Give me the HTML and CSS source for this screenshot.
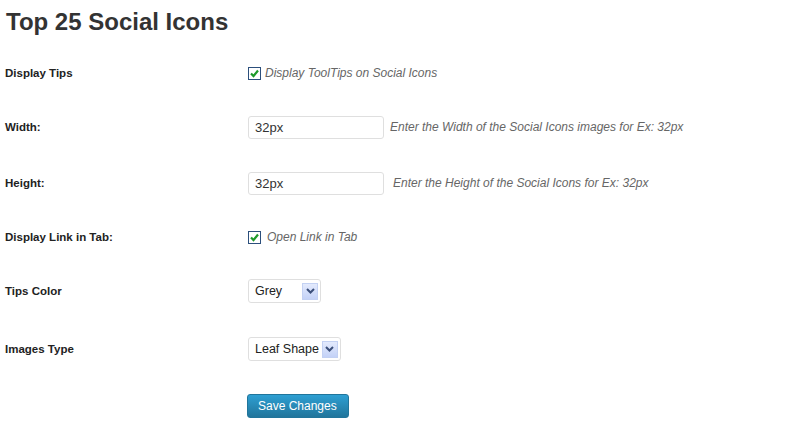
FILE: index.html
```html
<!DOCTYPE html>
<html>
<head>
<meta charset="utf-8">
<link rel="stylesheet" href="styles.css">
</head>
<body>
<div class="wrap">
  <h2 class="title">Top 25 Social Icons</h2>
  <div class="form">
    <div class="row r1">
      <div class="label">Display Tips</div>
      <div class="field">
        <span class="check"><svg width="11" height="11" viewBox="0 0 11 11"><path d="M2 5.5 L4.5 8 L9 2.5" fill="none" stroke="#1e9a2a" stroke-width="2.2"/></svg></span>
        <span class="desc">Display ToolTips on Social Icons</span>
      </div>
    </div>
    <div class="row r2">
      <div class="label">Width:</div>
      <div class="field">
        <span class="input">32px</span>
        <span class="desc d-width">Enter the Width of the Social Icons images for Ex: 32px</span>
      </div>
    </div>
    <div class="row r3">
      <div class="label">Height:</div>
      <div class="field">
        <span class="input">32px</span>
        <span class="desc d-height">Enter the Height of the Social Icons for Ex: 32px</span>
      </div>
    </div>
    <div class="row r4">
      <div class="label">Display Link in Tab:</div>
      <div class="field">
        <span class="check"><svg width="11" height="11" viewBox="0 0 11 11"><path d="M2 5.5 L4.5 8 L9 2.5" fill="none" stroke="#1e9a2a" stroke-width="2.2"/></svg></span>
        <span class="desc d-tab">Open Link in Tab</span>
      </div>
    </div>
    <div class="row r5">
      <div class="label">Tips Color</div>
      <div class="field">
        <span class="select sel-grey"><span class="sel-text">Grey</span><span class="arrow"><svg width="9" height="6" viewBox="0 0 9 6"><path d="M1 1 L4.5 4.5 L8 1" fill="none" stroke="#3b4f7a" stroke-width="2"/></svg></span></span>
      </div>
    </div>
    <div class="row r6">
      <div class="label">Images Type</div>
      <div class="field">
        <span class="select"><span class="sel-text">Leaf Shape</span><span class="arrow"><svg width="9" height="6" viewBox="0 0 9 6"><path d="M1 1 L4.5 4.5 L8 1" fill="none" stroke="#3b4f7a" stroke-width="2"/></svg></span></span>
      </div>
    </div>
    <div class="row r7">
      <div class="label"></div>
      <div class="field">
        <span class="button">Save Changes</span>
      </div>
    </div>
  </div>
</div>
</body>
</html>
```
FILE: styles.css
```css
html, body {
  margin: 0;
  padding: 0;
  background: #fff;
}
body {
  font-family: "Liberation Sans", Arial, sans-serif;
  color: #333;
}
.wrap {
  padding: 0 0 0 5px;
}
.title {
  margin: 0;
  padding: 8px 0 0 1px;
  height: 46px;
  box-sizing: border-box;
  font-size: 24px;
  font-weight: bold;
  color: #333;
  line-height: 28px;
}
.form {
  display: flex;
  flex-direction: column;
}
.row {
  display: flex;
  align-items: center;
}
.r1 { height: 54px; }
.r2 { height: 54px; }
.r3 { height: 58px; }
.r4 { height: 50px; }
.r5 { height: 58px; }
.r6 { height: 58px; }
.r7 { height: 56px; }
.label {
  width: 243px;
  flex: none;
  font-size: 11.5px;
  font-weight: bold;
  color: #222;
}
.field {
  display: flex;
  align-items: center;
}
.check {
  width: 11px;
  height: 11px;
  border: 1px solid #2c4f7c;
  background: #fff;
  display: flex;
  align-items: center;
  justify-content: center;
  margin-right: 4px;
}
.desc {
  font-size: 12px;
  font-style: italic;
  color: #666;
}
.d-width { margin-left: 6px; }
.d-height { margin-left: 9px; }
.d-tab { margin-left: 2px; }
.input {
  border: 1px solid #dfdfdf;
  border-radius: 3px;
  font-size: 13px;
  color: #333;
  padding-left: 6px;
  display: flex;
  align-items: center;
  box-sizing: border-box;
  width: 136px;
  height: 23px;
}
.select {
  display: flex;
  align-items: center;
  height: 24px;
  box-sizing: border-box;
  border: 1px solid #dfdfdf;
  border-radius: 3px;
  padding: 0 2px 0 6px;
  font-size: 12.5px;
  color: #222;
}
.sel-grey .sel-text {
  width: 44px;
}
.sel-text {
  margin-right: 3px;
}
.arrow {
  width: 16px;
  height: 17px;
  box-sizing: border-box;
  border: 1px solid #c3d1f3;
  background: linear-gradient(#e3eafd, #c4d2f7);
  display: flex;
  align-items: center;
  justify-content: center;
}
.button {
  display: inline-block;
  height: 24px;
  line-height: 22px;
  box-sizing: border-box;
  padding: 0 11px 0 10px;
  border: 1px solid #21759b;
  border-radius: 3px;
  background: linear-gradient(#2e9fd2, #21759b);
  color: #fff;
  font-size: 12px;
  margin-left: -1px;
}
```
